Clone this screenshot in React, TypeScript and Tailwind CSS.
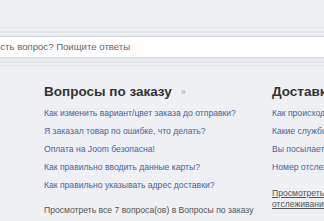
const leftLinks = [
  'Как изменить вариант/цвет заказа до отправки?',
  'Я заказал товар по ошибке, что делать?',
  'Оплата на Joom безопасна!',
  'Как правильно вводить данные карты?',
  'Как правильно указывать адрес доставки?',
];

const rightLinks = [
  'Как происходит доставка заказа?',
  'Какие службы доставки вы используете?',
  'Вы посылаете заказы в мой город?',
  'Номер отслеживания не работает',
];

function Column({
  title,
  links,
  children,
}: {
  title: string;
  links: string[];
  children: React.ReactNode;
}) {
  return (
    <div className="w-[228px] shrink-0">
      <div className="flex items-center h-[18px]">
        <h2 className="text-[13.5px] leading-[18px] font-bold text-[#333] whitespace-nowrap">{title}</h2>
        <span className="ml-[9px] mt-[1px] text-[9px] leading-none text-[#9aa0a8]">»</span>
      </div>
      <ul className="mt-[3px]">
        {links.map((l) => (
          <li key={l} className="h-[18px] text-[8.6px] leading-[18px] text-[#45669a] whitespace-nowrap">
            {l}
          </li>
        ))}
      </ul>
      {children}
    </div>
  );
}

export default function App() {
  return (
    <div
      className="w-[324px] h-[221px] overflow-hidden bg-[#eef0f4]"
      style={{ fontFamily: '"Liberation Sans", Arial, sans-serif' }}
    >
      {/* search strip */}
      <div className="pt-[27px]">
        <div className="h-px bg-[#e3e6ea]" />
        <div className="h-[3px]" />
        <div className="h-[2px] bg-[#e1e4e8]" />
        <div className="h-[3px] bg-[#eceff2]" />
        <div className="h-px bg-[#d3d7dc]" />
        <div className="h-[20px] bg-white flex items-center">
          <span className="ml-[-6px] text-[9.6px] text-[#666] whitespace-nowrap">Есть вопрос? Поищите ответы</span>
        </div>
        <div className="h-px bg-[#d6d9de]" />
        <div className="h-[4px] bg-[#e9ecef]" />
        <div className="h-px bg-[#e0e3e7]" />
        <div className="h-[2px]" />
        <div className="h-px bg-[#e5e8ec]" />
      </div>

      {/* FAQ columns */}
      <div className="flex pl-[44px] pt-[17px]">
        <Column title="Вопросы по заказу" links={leftLinks}>
          <p className="mt-[7px] text-[8.6px] leading-[18px] text-[#555] whitespace-nowrap">
            Просмотреть все 7 вопроса(ов) в Вопросы по заказу
          </p>
        </Column>
        <Column title="Доставка и отслеживание" links={rightLinks}>
          <p className="mt-[12px] w-[200px] text-[8.6px] leading-[11px] text-[#555] underline">
            Просмотреть все 6 вопроса(ов) в Доставка и отслеживание
          </p>
        </Column>
      </div>
    </div>
  );
}
